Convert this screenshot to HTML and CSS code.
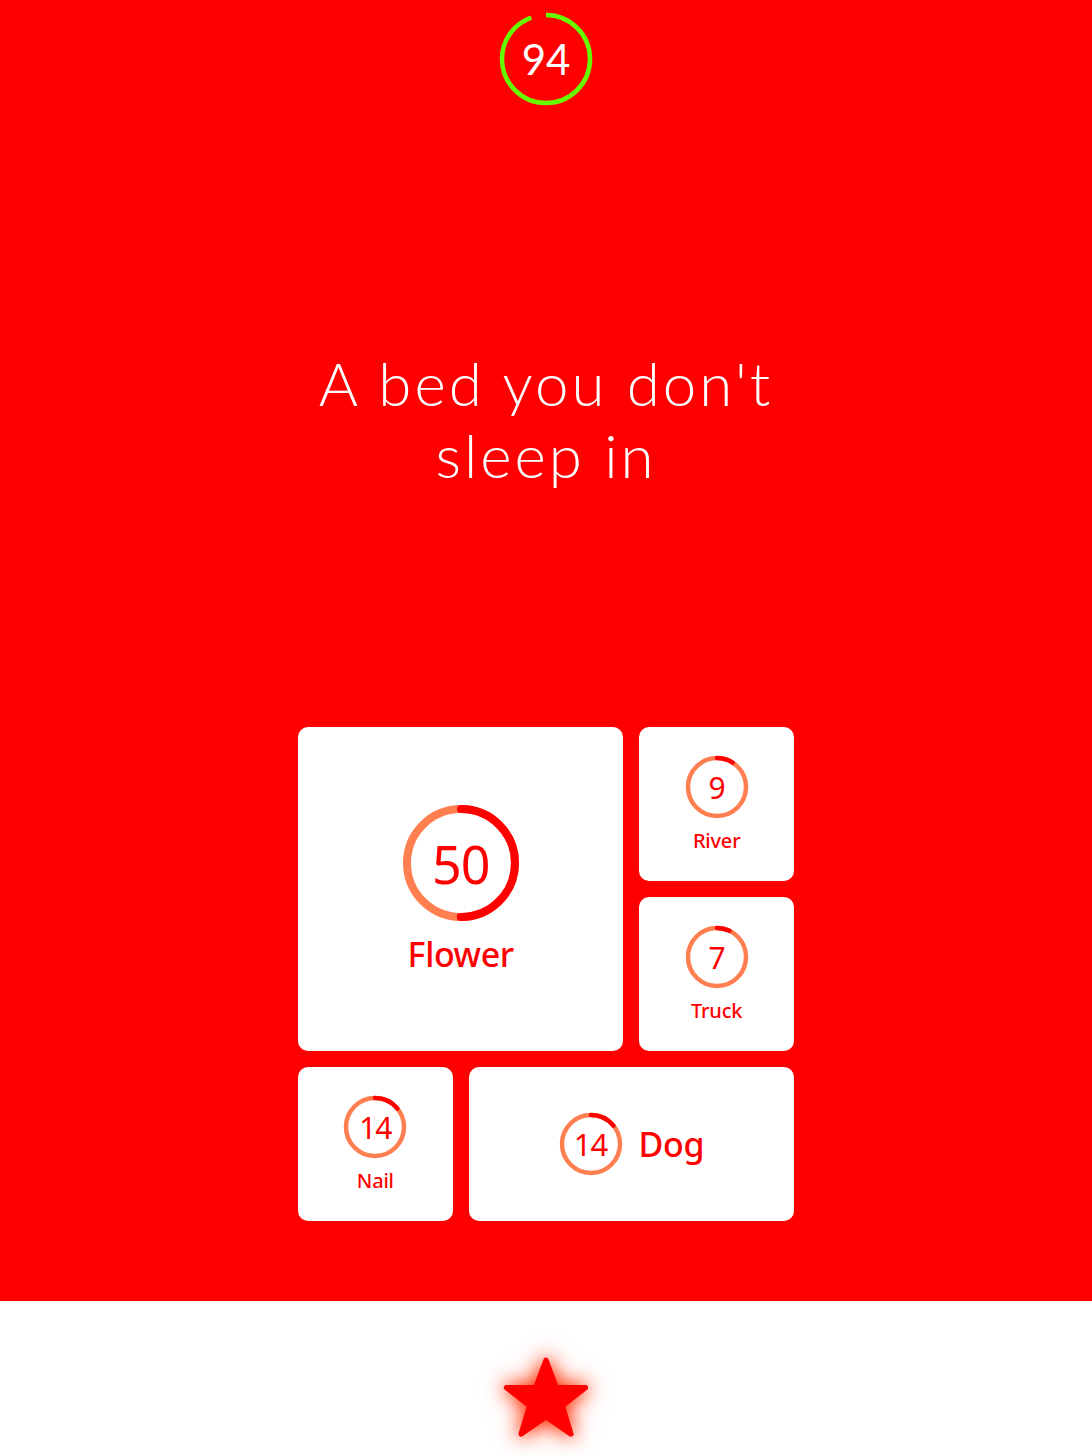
FILE: index.html
```html
<!DOCTYPE html>
<html>
<head>
<meta charset="utf-8">
<link rel="stylesheet" href="styles.css">
</head>
<body>
<div class="stage">
  <div class="timer">
    <svg class="timer-ring" viewBox="0 0 96 96" width="96" height="96">
      <circle cx="48" cy="48" r="44" class="timer-arc" style="stroke-dasharray: 261 276.5"/>
    </svg>
    <span class="timer-num">94</span>
  </div>
  <h1 class="question">A bed you don't<br>sleep in</h1>
  <div class="board">
    <div class="card big">
      <div class="ring ring-lg">
        <svg viewBox="0 0 120 120" width="120" height="120">
          <circle cx="60" cy="60" r="54" class="track track-lg"/>
          <circle cx="60" cy="60" r="54" class="prog prog-lg" style="stroke-dasharray: 169.6 339.3"/>
        </svg>
        <span class="num num-lg">50</span>
      </div>
      <div class="label label-lg">Flower</div>
    </div>
    <div class="card">
      <div class="ring ring-sm">
        <svg viewBox="0 0 64 64" width="64" height="64">
          <circle cx="32" cy="32" r="29" class="track"/>
          <circle cx="32" cy="32" r="29" class="prog" style="stroke-dasharray: 16.4 182.2"/>
        </svg>
        <span class="num">9</span>
      </div>
      <div class="label">River</div>
    </div>
    <div class="card">
      <div class="ring ring-sm">
        <svg viewBox="0 0 64 64" width="64" height="64">
          <circle cx="32" cy="32" r="29" class="track"/>
          <circle cx="32" cy="32" r="29" class="prog" style="stroke-dasharray: 12.8 182.2"/>
        </svg>
        <span class="num">7</span>
      </div>
      <div class="label">Truck</div>
    </div>
    <div class="card">
      <div class="ring ring-sm">
        <svg viewBox="0 0 64 64" width="64" height="64">
          <circle cx="32" cy="32" r="29" class="track"/>
          <circle cx="32" cy="32" r="29" class="prog" style="stroke-dasharray: 25.5 182.2"/>
        </svg>
        <span class="num">14</span>
      </div>
      <div class="label">Nail</div>
    </div>
    <div class="card wide">
      <div class="ring ring-sm">
        <svg viewBox="0 0 64 64" width="64" height="64">
          <circle cx="32" cy="32" r="29" class="track"/>
          <circle cx="32" cy="32" r="29" class="prog" style="stroke-dasharray: 25.5 182.2"/>
        </svg>
        <span class="num num-md">14</span>
      </div>
      <div class="label label-lg">Dog</div>
    </div>
  </div>
</div>
<div class="footer">
  <svg class="star" viewBox="0 0 100 100" width="86" height="86">
    <polygon points="50,6 62,38 96,38 69,59 79,92 50,72 21,92 31,59 4,38 38,38" />
  </svg>
</div>
</body>
</html>
```

FILE: styles.css
```css
html, body {
  margin: 0;
  padding: 0;
}
body {
  width: 1092px;
  height: 1456px;
  overflow: hidden;
  background: #ffffff;
  font-family: "Noto Sans", "Open Sans", sans-serif;
}
.stage {
  background: #ff0000;
  height: 1301px;
  display: flex;
  flex-direction: column;
  align-items: center;
}
.timer {
  position: relative;
  margin-top: 11px;
  width: 96px;
  height: 96px;
}
.timer-ring {
  transform: rotate(-90deg);
  display: block;
}
.timer-arc {
  fill: none;
  stroke: #66ff00;
  stroke-width: 4.5;
}
.timer-num {
  position: absolute;
  inset: 0;
  display: flex;
  align-items: center;
  justify-content: center;
  color: #ffffff;
  font-family: "Lato", "Noto Sans", sans-serif;
  font-weight: 400;
  font-size: 42px;
}
.question {
  margin: 240px 0 0 0;
  color: #ffffff;
  font-family: "Lato", "Noto Sans", sans-serif;
  font-weight: 300;
  font-size: 60px;
  line-height: 72px;
  letter-spacing: 3px;
  text-align: center;
}
.board {
  margin-top: 236px;
  width: 496px;
  display: grid;
  grid-template-columns: repeat(3, 1fr);
  grid-auto-rows: 154px;
  gap: 16px;
}
.card {
  background: #ffffff;
  border-radius: 10px;
  display: flex;
  flex-direction: column;
  align-items: center;
  justify-content: center;
  gap: 10px;
}
.card.big {
  grid-column: 1 / span 2;
  grid-row: 1 / span 2;
  gap: 10px;
}
.card.wide {
  grid-column: 2 / span 2;
  flex-direction: row;
  gap: 16px;
}
.ring {
  position: relative;
}
.ring svg {
  display: block;
  transform: rotate(-90deg);
}
.track {
  fill: none;
  stroke: #ff7f50;
  stroke-width: 4.5;
}
.prog {
  fill: none;
  stroke: #ff0000;
  stroke-width: 4.5;
  stroke-linecap: round;
}
.track-lg, .prog-lg {
  stroke-width: 8;
}
.num {
  position: absolute;
  inset: 0;
  display: flex;
  align-items: center;
  justify-content: center;
  color: #ff0000;
  font-size: 30px;
  font-weight: 400;
  letter-spacing: -1px;
}
.num-md {
  font-size: 31px;
}
.num-lg {
  font-size: 52px;
  letter-spacing: -1px;
}
.label {
  color: #ff0000;
  font-size: 20px;
  font-weight: 500;
  line-height: 24px;
  letter-spacing: -0.2px;
}
.label-lg {
  font-size: 34px;
  line-height: 42px;
  letter-spacing: -0.4px;
}
.footer {
  height: 155px;
  display: flex;
  justify-content: center;
  align-items: flex-start;
  padding-top: 54px;
  box-sizing: border-box;
}
.star {
  fill: #ff0000;
  stroke: #ff0000;
  stroke-width: 6;
  stroke-linejoin: round;
  overflow: visible;
  filter: drop-shadow(0 0 9px #ff2a00) drop-shadow(0 0 12px rgba(255, 100, 60, 0.45));
}
```
